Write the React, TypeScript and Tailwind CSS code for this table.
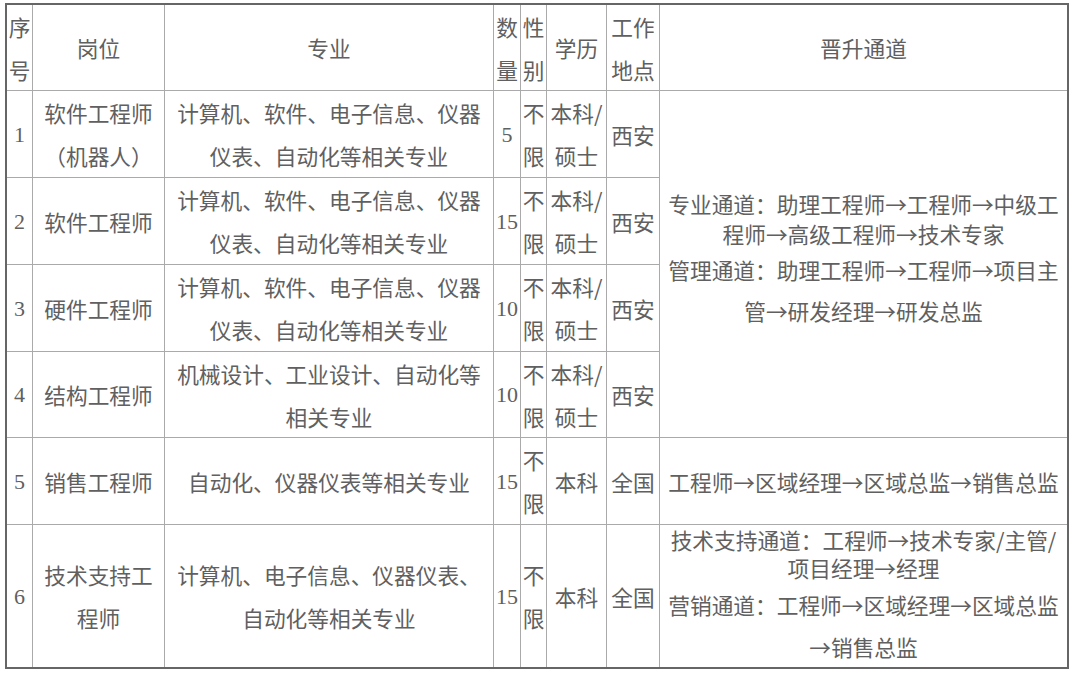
import React from "react";

const Num = ({ children }: { children: React.ReactNode }) => (
  <span className="font-['Liberation_Serif',serif] text-[22px]">{children}</span>
);

const Cell = ({
  children,
  className = "",
}: {
  children?: React.ReactNode;
  className?: string;
}) => (
  <div
    className={
      "bg-white flex flex-col items-center justify-center text-center whitespace-nowrap leading-[43px] " +
      className
    }
  >
    {children}
  </div>
);

const rows = [
  {
    n: "1",
    job: (
      <>
        软件工程师
        <br />
        （机器人）
      </>
    ),
    major: (
      <>
        计算机、软件、电子信息、仪器
        <br />
        仪表、自动化等相关专业
      </>
    ),
    count: "5",
    edu: (
      <>
        本科/
        <br />
        硕士
      </>
    ),
    loc: "西安",
  },
  {
    n: "2",
    job: <>软件工程师</>,
    major: (
      <>
        计算机、软件、电子信息、仪器
        <br />
        仪表、自动化等相关专业
      </>
    ),
    count: "15",
    edu: (
      <>
        本科/
        <br />
        硕士
      </>
    ),
    loc: "西安",
  },
  {
    n: "3",
    job: <>硬件工程师</>,
    major: (
      <>
        计算机、软件、电子信息、仪器
        <br />
        仪表、自动化等相关专业
      </>
    ),
    count: "10",
    edu: (
      <>
        本科/
        <br />
        硕士
      </>
    ),
    loc: "西安",
  },
  {
    n: "4",
    job: <>结构工程师</>,
    major: (
      <>
        机械设计、工业设计、自动化等
        <br />
        相关专业
      </>
    ),
    count: "10",
    edu: (
      <>
        本科/
        <br />
        硕士
      </>
    ),
    loc: "西安",
  },
];

export default function App() {
  return (
    <div className="w-[1080px] h-[673px] bg-white pt-[3px] pl-[5px] font-['Noto_Sans_CJK_SC',sans-serif] text-[21.7px] text-[#606060]">
      <div className="grid w-fit grid-cols-[25px_131px_328px_26px_25px_59px_52px_407px] grid-rows-[85px_86px_86px_86px_85px_86px_142px] gap-px bg-[#aaaaaa] border-2 border-[#666666]">
        {/* header */}
        <Cell>
          序
          <br />号
        </Cell>
        <Cell>岗位</Cell>
        <Cell>专业</Cell>
        <Cell>
          数
          <br />量
        </Cell>
        <Cell>
          性
          <br />别
        </Cell>
        <Cell>学历</Cell>
        <Cell>
          工作
          <br />
          地点
        </Cell>
        <Cell>晋升通道</Cell>

        {rows.map((r, i) => (
          <React.Fragment key={r.n}>
            <Cell>
              <Num>{r.n}</Num>
            </Cell>
            <Cell>
              <div>{r.job}</div>
            </Cell>
            <Cell>
              <div>{r.major}</div>
            </Cell>
            <Cell>
              <Num>{r.count}</Num>
            </Cell>
            <Cell>
              <div>
                不<br />限
              </div>
            </Cell>
            <Cell>
              <div>{r.edu}</div>
            </Cell>
            <Cell>{r.loc}</Cell>
            {i === 0 && (
              <Cell className="row-span-4 col-start-8 row-start-2">
                <div className="leading-[30px] mt-[-8px]">
                  专业通道：助理工程师→工程师→中级工
                  <br />
                  程师→高级工程师→技术专家
                </div>
                <div className="leading-[41px]">
                  管理通道：助理工程师→工程师→项目主
                  <br />
                  管→研发经理→研发总监
                </div>
              </Cell>
            )}
          </React.Fragment>
        ))}

        {/* row 5 */}
        <Cell>
          <Num>5</Num>
        </Cell>
        <Cell>销售工程师</Cell>
        <Cell>自动化、仪器仪表等相关专业</Cell>
        <Cell>
          <Num>15</Num>
        </Cell>
        <Cell>
          <div>
            不<br />限
          </div>
        </Cell>
        <Cell>本科</Cell>
        <Cell>全国</Cell>
        <Cell>工程师→区域经理→区域总监→销售总监</Cell>

        {/* row 6 */}
        <Cell>
          <Num>6</Num>
        </Cell>
        <Cell>
          <div>
            技术支持工
            <br />
            程师
          </div>
        </Cell>
        <Cell>
          <div>
            计算机、电子信息、仪器仪表、
            <br />
            自动化等相关专业
          </div>
        </Cell>
        <Cell>
          <Num>15</Num>
        </Cell>
        <Cell>
          <div>
            不<br />限
          </div>
        </Cell>
        <Cell>本科</Cell>
        <Cell>全国</Cell>
        <Cell className="justify-start">
          <div className="leading-[28px] pt-[1px]">
            技术支持通道：工程师→技术专家/主管/
            <br />
            项目经理→经理
          </div>
          <div className="leading-[42px] mt-[2px]">
            营销通道：工程师→区域经理→区域总监
            <br />
            →销售总监
          </div>
        </Cell>
      </div>
    </div>
  );
}
